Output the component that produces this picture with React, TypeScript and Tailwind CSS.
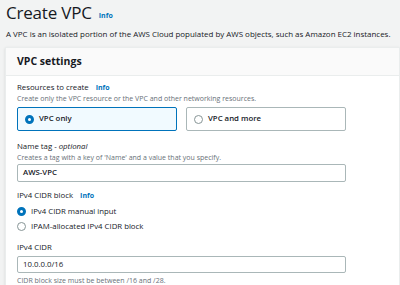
import React from 'react';

const font = { fontFamily: '"Open Sans", "Noto Sans", sans-serif' };

function Info({ className = '' }: { className?: string }) {
  return <span className={`text-[7px] font-bold text-[#0073bb] ${className}`}>Info</span>;
}

function Radio({ checked }: { checked?: boolean }) {
  return checked ? (
    <span className="w-[9px] h-[9px] rounded-full border-[3px] border-[#0073bb] bg-white shrink-0" />
  ) : (
    <span className="w-[9px] h-[9px] rounded-full border border-[#879596] bg-white shrink-0" />
  );
}

export default function App() {
  return (
    <div className="w-[400px] h-[285px] overflow-hidden bg-[#f2f3f3] text-[#16191f]" style={font}>
      <div className="px-[6px] pt-[2px]">
        <div className="flex items-end gap-[7px] h-[22px]">
          <h1 className="text-[17px] leading-[22px] font-normal tracking-[-0.2px]">Create VPC</h1>
          <Info className="mb-[3px]" />
        </div>
        <p className="mt-[4px] text-[7.95px] leading-[12px] whitespace-nowrap">
          A VPC is an isolated portion of the AWS Cloud populated by AWS objects, such as Amazon EC2 instances.
        </p>
      </div>

      <div className="mt-[7px] ml-[5px] bg-white border border-[#eaeded] shadow-sm">
        <div className="h-[28px] bg-[#fafafa] border-b border-[#eaeded] px-[11px] flex items-center">
          <h2 className="text-[10.5px] font-bold">VPC settings</h2>
        </div>

        <div className="px-[11px] pt-[6px] w-[351px]">
          <div className="flex items-center gap-[7px] h-[12px]">
            <span className="text-[7.8px]">Resources to create</span>
            <Info />
          </div>
          <div className="text-[7px] text-[#687078] leading-[10px]">
            Create only the VPC resource or the VPC and other networking resources.
          </div>
          <div className="mt-[3px] grid grid-cols-2 gap-[9px]">
            <div className="h-[24px] border border-[#0073bb] bg-[#f1faff] rounded-[2px] flex items-center gap-[5px] px-[7px]">
              <Radio checked />
              <span className="text-[7.8px] font-semibold">VPC only</span>
            </div>
            <div className="h-[24px] border border-[#aab7b8] bg-white rounded-[2px] flex items-center gap-[5px] px-[7px]">
              <Radio />
              <span className="text-[7.8px] font-semibold">VPC and more</span>
            </div>
          </div>

          <div className="mt-[9px] h-[13px] text-[7.8px] flex items-center">
            Name tag - <span className="italic ml-[2px]">optional</span>
          </div>
          <div className="text-[7px] text-[#687078] leading-[10px]">
            Creates a tag with a key of 'Name' and a value that you specify.
          </div>
          <div className="mt-[1px] h-[18px] border border-[#aab7b8] rounded-[2px] px-[5px] flex items-center text-[7.8px] font-semibold">
            AWS-VPC
          </div>

          <div className="mt-[7px] flex items-center gap-[7px] h-[14px]">
            <span className="text-[7.8px]">IPv4 CIDR block</span>
            <Info />
          </div>
          <div className="mt-[1px] flex items-center gap-[5px] h-[15px]">
            <Radio checked />
            <span className="text-[7.8px]">IPv4 CIDR manual input</span>
          </div>
          <div className="flex items-center gap-[5px] h-[15px]">
            <Radio />
            <span className="text-[7.8px]">IPAM-allocated IPv4 CIDR block</span>
          </div>

          <div className="mt-[7px] h-[13px] text-[7.8px] flex items-center">IPv4 CIDR</div>
          <div className="mt-[2px] h-[17px] border border-[#aab7b8] rounded-[2px] px-[5px] flex items-center text-[7.8px]">
            10.0.0.0/16
          </div>
          <div className="mt-[3px] text-[7px] text-[#687078] leading-[10px]">
            CIDR block size must be between /16 and /28.
          </div>
        </div>
      </div>
    </div>
  );
}
